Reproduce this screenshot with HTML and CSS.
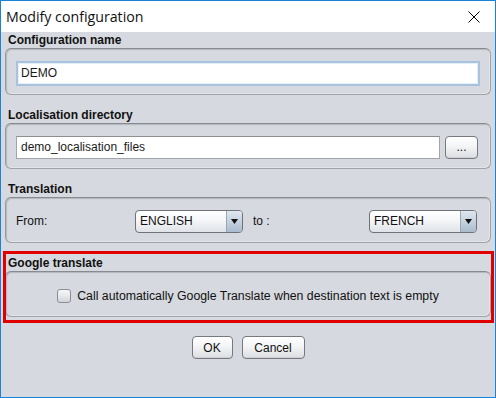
FILE: index.html
```html
<!DOCTYPE html>
<html>
<head>
<meta charset="utf-8">
<link rel="stylesheet" href="styles.css">
</head>
<body>
<div class="window">
  <div class="titlebar">
    <span class="title">Modify configuration</span>
    <svg class="close" width="12" height="12" viewBox="0 0 12 12"><path d="M0.5 0.5 L11.5 11.5 M11.5 0.5 L0.5 11.5" stroke="#000" stroke-width="1" fill="none"/></svg>
  </div>
  <div class="content">
    <div class="section">
      <div class="label">Configuration name</div>
      <div class="panel panel-first">
        <div class="field field-focus">DEMO</div>
      </div>
    </div>
    <div class="section">
      <div class="label">Localisation directory</div>
      <div class="panel">
        <div class="field field-dir">demo_localisation_files</div>
        <div class="btn btn-browse">...</div>
      </div>
    </div>
    <div class="section">
      <div class="label">Translation</div>
      <div class="panel">
        <span class="from">From:</span>
        <div class="combo"><span class="combo-text">ENGLISH</span><span class="combo-arrow"><svg width="7" height="5" viewBox="0 0 7 5"><path d="M0 0 H7 L3.5 5 Z" fill="#111"/></svg></span></div>
        <span class="to">to :</span>
        <div class="combo"><span class="combo-text">FRENCH</span><span class="combo-arrow"><svg width="7" height="5" viewBox="0 0 7 5"><path d="M0 0 H7 L3.5 5 Z" fill="#111"/></svg></span></div>
      </div>
    </div>
    <div class="section section-marked">
      <div class="label">Google translate</div>
      <div class="panel panel-center">
        <span class="checkbox"></span>
        <span class="check-text">Call automatically Google Translate when destination text is empty</span>
      </div>
    </div>
    <div class="buttons">
      <div class="btn btn-ok">OK</div>
      <div class="btn btn-cancel">Cancel</div>
    </div>
  </div>
</div>
</body>
</html>
```
FILE: styles.css
```css
html, body {
  margin: 0;
  padding: 0;
}
body {
  width: 496px;
  height: 398px;
  overflow: hidden;
  font-family: "Liberation Sans", Arial, sans-serif;
  font-size: 12px;
  color: #000;
}
.window {
  width: 496px;
  height: 398px;
  box-sizing: border-box;
  border: 1px solid #1883d7;
  background: #d6d9df;
  display: flex;
  flex-direction: column;
}
.titlebar {
  height: 31px;
  background: #fff;
  display: flex;
  align-items: center;
  justify-content: space-between;
  padding: 0 15px 0 5px;
  flex: none;
}
.title {
  font-family: "Open Sans", "Noto Sans", sans-serif;
  font-size: 14.2px;
  color: #111;
}
.close {
  display: block;
  margin-top: 1px;
}
.content {
  padding: 0 4px 0 4px;
  display: flex;
  flex-direction: column;
  gap: 12px;
}
.section {
  display: flex;
  flex-direction: column;
}
.label {
  height: 16px;
  line-height: 16px;
  font-weight: bold;
  padding-left: 3px;
  color: #111;
}
.panel {
  height: 46px;
  box-sizing: border-box;
  border: 1px solid #a0a3a8;
  border-top-color: #878a8f;
  border-left-color: #969a9f;
  border-radius: 6px;
  box-shadow: inset 1px 1px 1px rgba(0,0,0,0.16), inset -1px -1px 0 rgba(255,255,255,0.3);
  padding: 12px 10px 0 10px;
  display: flex;
  align-items: flex-start;
}
.panel-first {
  height: 47px;
}
.field {
  flex: 1;
  height: 23px;
  box-sizing: border-box;
  background: #fff;
  border: 1px solid #a2a4a8;
  border-top-color: #8c8e92;
  line-height: 21px;
  padding-left: 4px;
  color: #1a1a1a;
}
.field-focus {
  height: 25px;
  line-height: 21px;
  border: 2px solid #a9c2de;
  padding-left: 3px;
  box-shadow: inset 0 0 0 1px #e6eef7;
}
.field-dir {
  margin-right: 5px;
}
.btn {
  box-sizing: border-box;
  height: 22px;
  border: 1px solid #76797e;
  border-radius: 4px;
  background: linear-gradient(#ffffff 0%, #f3f4f6 45%, #dcdee2 100%);
  box-shadow: inset 0 -1px 0 rgba(0,0,0,0.06);
  display: flex;
  align-items: center;
  justify-content: center;
  color: #111;
}
.btn-browse {
  width: 33px;
  height: 23px;
  margin-right: 2px;
  padding-bottom: 2px;
}
.from {
  width: 119px;
  line-height: 23px;
  color: #111;
}
.to {
  width: 116px;
  margin-left: 10px;
  line-height: 23px;
  color: #111;
}
.combo {
  width: 108px;
  height: 23px;
  box-sizing: border-box;
  border: 1px solid #6f7377;
  border-radius: 4px;
  background: linear-gradient(#ffffff 0%, #f5f6f8 45%, #dfe2e7 100%);
  display: flex;
  overflow: hidden;
}
.combo-text {
  flex: 1;
  padding-left: 4px;
  line-height: 21px;
  color: #111;
}
.combo-arrow {
  width: 15px;
  border-left: 1px solid #9aa6b3;
  background: linear-gradient(#dfe7f0 0%, #c5d2e0 50%, #a9bbcd 100%);
  display: flex;
  align-items: center;
  justify-content: center;
}
.combo-arrow svg {
  display: block;
}
.panel-center {
  justify-content: center;
  align-items: center;
  padding-top: 12px;
  padding-bottom: 9px;
  gap: 6px;
}
.checkbox {
  width: 14px;
  height: 14px;
  box-sizing: border-box;
  border: 1px solid #8a8d92;
  border-radius: 3px;
  background: linear-gradient(#f6f7f9 0%, #e4e6ea 55%, #cfd2d7 100%);
  margin-top: 1px;
}
.check-text {
  font-size: 12.3px;
  color: #111;
}
.section-marked {
  position: relative;
}
.section-marked::after {
  content: "";
  position: absolute;
  top: -4px;
  left: -2px;
  right: -3px;
  bottom: -6px;
  border: 3px solid #e00000;
  pointer-events: none;
}
.buttons {
  margin-top: 7px;
  display: flex;
  justify-content: center;
  gap: 9px;
}
.btn-ok {
  width: 41px;
  height: 23px;
}
.btn-cancel {
  width: 63px;
  height: 23px;
}
```
